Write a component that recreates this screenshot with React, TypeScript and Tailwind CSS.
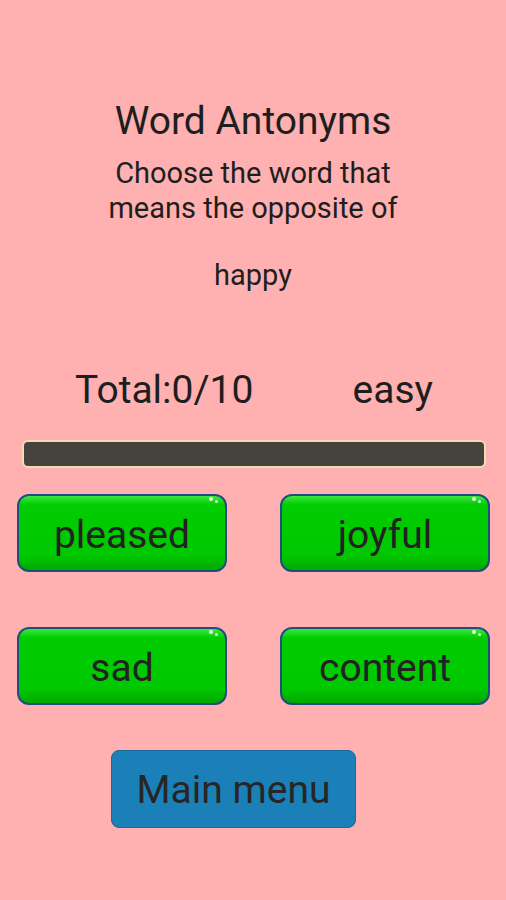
import React from "react"

const options = ["pleased", "joyful", "sad", "content"]

function AnswerButton({ label }: { label: string }) {
    return (
        <button className="relative h-[78px] w-[210px] rounded-[12px] border-2 border-[#1f4f80] bg-[linear-gradient(#3be83b_0%,#00cc00_12%,#00c800_80%,#00a800_100%)] pt-[5px] text-[39px] leading-none text-[#222222]">
            <span className="absolute right-[12px] top-[1px] h-[4px] w-[4px] rounded-full bg-white/90" />
            <span className="absolute right-[7px] top-[4px] h-[3px] w-[3px] rounded-full bg-white/80" />
            {label}
        </button>
    )
}

export default function App() {
    return (
        <div className="flex min-h-[900px] w-full flex-col bg-[#ffb0b0] font-['Roboto','Liberation_Sans',sans-serif] text-[#1e1e1e]">
            <div className="flex flex-col items-center pt-[100px] text-center">
                <h1 className="text-[39px] leading-[42px]">Word Antonyms</h1>
                <p className="mt-[14px] text-[29px] leading-[35px]">
                    Choose the word that
                    <br />
                    means the opposite of
                </p>
                <p className="mt-[32px] text-[29px] leading-[35px]">happy</p>
            </div>

            <div className="mt-[75px] flex text-[39px] leading-[44px]">
                <span className="ml-[75px]">Total:0/10</span>
                <span className="ml-auto mr-[73px]">easy</span>
            </div>

            <div className="ml-[22px] mr-[20px] mt-[28px] h-[28px] rounded-[6px] border-2 border-[#f2dcb4] bg-[#46433d]" />

            <div className="mt-[26px] grid grid-cols-[210px_210px] justify-between gap-y-[55px] pl-[17px] pr-[16px]">
                {options.map(o => (
                    <AnswerButton key={o} label={o} />
                ))}
            </div>

            <button className="ml-[111px] mt-[45px] h-[78px] w-[245px] rounded-[8px] border border-[#1a6a98] bg-[#1b80b8] pt-[2px] text-[39px] leading-none text-[#262626]">
                Main menu
            </button>
        </div>
    )
}
